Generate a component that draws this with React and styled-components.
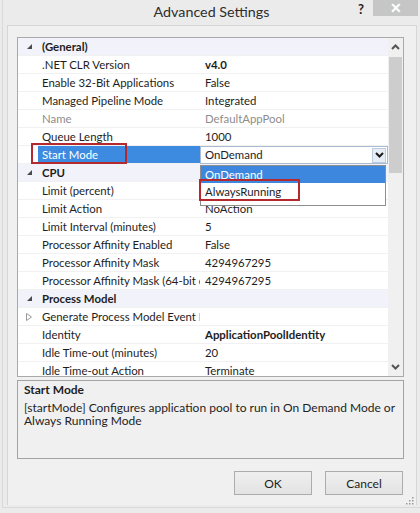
import React from 'react';
import styled, { createGlobalStyle, css } from 'styled-components';

const GlobalStyle = createGlobalStyle`
  html, body { margin: 0; padding: 0; background: #ebebeb; }
  body {
    font-family: Lato, "Noto Sans", sans-serif;
    font-size: 12px;
    color: #1e1e1e;
  }
  * { box-sizing: border-box; }
`;

const Window = styled.div`
  position: relative;
  width: 420px;
  height: 513px;
  background: #ebebeb;
  padding: 0 0 5px 2px;
  display: flex;
`;

const Frame = styled.div`
  flex: 1;
  display: flex;
  flex-direction: column;
  border-left: 1px solid #d9d9d9;
  border-bottom: 1px solid #d9d9d9;
  padding: 0 3px 2px 4px;
`;

const TitleBar = styled.div`
  height: 25px;
  margin: 0 -3px 0 -5px;
  display: grid;
  grid-template-columns: 1fr auto 1fr;
  align-items: start;
`;

const Title = styled.div`
  grid-column: 2;
  font-size: 14.3px;
  line-height: 24px;
  color: #2e2e2e;
  padding-left: 1px;
`;

const Controls = styled.div`
  grid-column: 3;
  justify-self: end;
  display: flex;
  align-items: flex-start;
  gap: 9px;
  margin-right: 2px;
`;

const Help = styled.span`
  font-weight: 700;
  font-size: 13px;
  line-height: 19px;
  color: #222;
`;

const Close = styled.div`
  width: 45px;
  height: 16px;
  background: #c6c6c6;
  color: #fff;
  font-size: 14px;
  font-weight: 700;
  display: flex;
  align-items: center;
  justify-content: center;
  line-height: 1;
`;

const Client = styled.div`
  flex: 1;
  background: #f0f0f0;
  border: 1px solid #d6d6d6;
  border-bottom: none;
  padding: 11px 12px 0 9px;
  display: flex;
  flex-direction: column;
`;

const Grid = styled.div`
  height: 340px;
  border: 1px solid #a9a9a9;
  background: #fff;
  display: flex;
  overflow: hidden;
  font-size: 11.4px;
`;

const Rows = styled.div`
  position: relative;
  flex: 1;
  overflow: hidden;
`;

const Row = styled.div`
  height: 18px;
  display: grid;
  grid-template-columns: 20px 162px 1fr;
  align-items: stretch;
  border-bottom: 1px solid #f1f1f1;
  background: ${p => (p.$category ? '#f2f3fa' : '#fff')};
`;

const Glyph = styled.div`
  display: flex;
  align-items: center;
  justify-content: flex-end;
  padding-right: 6px;
`;

const Cell = styled.div`
  white-space: nowrap;
  overflow: hidden;
  line-height: 17px;
  padding-left: 4px;
  ${p => p.$bold && css`font-weight: 700;`}
  ${p => p.$dim && css`color: #8d8d8d;`}
  ${p => p.$span && css`grid-column: 2 / 4;`}
  ${p => p.$selected && css`background: #3d8be0; color: #fff;`}
`;

const ValueCell = styled(Cell)`
  padding-left: 5px;
`;

const Combo = styled.div`
  display: flex;
  align-items: center;
  justify-content: space-between;
  border: 1px solid #a9bad3;
  margin-bottom: -1px;
  line-height: 16px;
  padding-left: 4px;
  padding-right: 1px;
`;

const ComboButton = styled.div`
  width: 14px;
  height: 15px;
  background: #e6edf7;
  border: 1px solid #bccbe0;
  display: flex;
  align-items: center;
  justify-content: center;
`;

const DropList = styled.div`
  position: absolute;
  left: 182px;
  top: 127px;
  width: 186px;
  height: 41px;
  background: #fff;
  border: 1px solid #8e8e8e;
  z-index: 2;
`;

const ListItem = styled.div`
  height: 17px;
  line-height: 17px;
  padding-left: 4px;
  ${p => p.$active && css`background: #3d88de; color: #fff;`}
`;

const Marker = styled.div`
  position: absolute;
  border: 2px solid #b3292d;
  z-index: 3;
  pointer-events: none;
`;

const Scrollbar = styled.div`
  width: 15px;
  background: #f0f0f0;
  display: flex;
  flex-direction: column;
`;

const ScrollButton = styled.div`
  height: 18px;
  display: flex;
  align-items: center;
  justify-content: center;
`;

const Track = styled.div`
  flex: 1;
  padding: 1px 1px 0 1px;
`;

const Thumb = styled.div`
  height: 116px;
  background: #cdcdcd;
`;

const Description = styled.div`
  margin-top: 3px;
  height: 79px;
  border: 1px solid #a3a3a3;
  padding: 2px 6px;
`;

const DescTitle = styled.div`
  font-weight: 700;
  line-height: 14px;
`;

const DescText = styled.div`
  margin-top: 4px;
  line-height: 13px;
`;

const ButtonRow = styled.div`
  margin-top: 12px;
  display: flex;
  justify-content: flex-end;
  gap: 13px;
  padding-right: 1px;
`;

const Button = styled.button`
  width: 78px;
  height: 24px;
  font-family: inherit;
  font-size: 12px;
  color: #1e1e1e;
  background: linear-gradient(#efefef, #e3e3e3);
  border: 1px solid #acacac;
  padding: 0;
`;

const Gripper = styled.svg`
  position: absolute;
  right: 6px;
  bottom: 8px;
`;

const Chevron = ({ up, color = '#555', w = 2 }) => (
  <svg width="9" height="6" viewBox="0 0 9 6">
    <polyline
      points={up ? '1,5 4.5,1.5 8,5' : '1,1 4.5,4.5 8,1'}
      fill="none"
      stroke={color}
      strokeWidth={w}
    />
  </svg>
);

const Expanded = () => (
  <svg width="5" height="5" viewBox="0 0 5 5">
    <polygon points="5,0 5,5 0,5" fill="#4a4a4a" />
  </svg>
);

const Collapsed = () => (
  <svg width="6" height="8" viewBox="0 0 6 8">
    <polygon points="0.5,0.5 5.5,4 0.5,7.5" fill="none" stroke="#9a9a9a" strokeWidth="1" />
  </svg>
);

const rows = [
  { cat: '(General)' },
  { label: '.NET CLR Version', value: 'v4.0', bold: true },
  { label: 'Enable 32-Bit Applications', value: 'False' },
  { label: 'Managed Pipeline Mode', value: 'Integrated' },
  { label: 'Name', value: 'DefaultAppPool', dim: true },
  { label: 'Queue Length', value: '1000' },
  { label: 'Start Mode', value: 'OnDemand', selected: true, combo: true },
  { cat: 'CPU' },
  { label: 'Limit (percent)', value: '0' },
  { label: 'Limit Action', value: 'NoAction' },
  { label: 'Limit Interval (minutes)', value: '5' },
  { label: 'Processor Affinity Enabled', value: 'False' },
  { label: 'Processor Affinity Mask', value: '4294967295' },
  { label: 'Processor Affinity Mask (64-bit option)', value: '4294967295' },
  { cat: 'Process Model' },
  { label: 'Generate Process Model Event Log Entry', value: '', expander: true },
  { label: 'Identity', value: 'ApplicationPoolIdentity', bold: true },
  { label: 'Idle Time-out (minutes)', value: '20' },
  { label: 'Idle Time-out Action', value: 'Terminate' },
];

export default function App() {
  return (
    <>
      <GlobalStyle />
      <Window>
        <Frame>
          <TitleBar>
            <Title>Advanced Settings</Title>
            <Controls>
              <Help>?</Help>
              <Close>✕</Close>
            </Controls>
          </TitleBar>
          <Client>
            <Grid>
              <Rows>
                {rows.map((r, i) =>
                  r.cat ? (
                    <Row key={i} $category>
                      <Glyph><Expanded /></Glyph>
                      <Cell $bold $span>{r.cat}</Cell>
                    </Row>
                  ) : (
                    <Row key={i}>
                      <Glyph>{r.expander && <Collapsed />}</Glyph>
                      <Cell $dim={r.dim} $selected={r.selected}>{r.label}</Cell>
                      {r.combo ? (
                        <Combo>
                          <span>{r.value}</span>
                          <ComboButton><Chevron color="#1a1a1a" /></ComboButton>
                        </Combo>
                      ) : (
                        <ValueCell $bold={r.bold} $dim={r.dim}>{r.value}</ValueCell>
                      )}
                    </Row>
                  )
                )}
                <DropList>
                  <ListItem $active>OnDemand</ListItem>
                  <ListItem>AlwaysRunning</ListItem>
                </DropList>
                <Marker style={{ left: 13, top: 105, width: 96, height: 21 }} />
                <Marker style={{ left: 181, top: 141, width: 101, height: 22 }} />
              </Rows>
              <Scrollbar>
                <ScrollButton><Chevron up /></ScrollButton>
                <Track><Thumb /></Track>
                <ScrollButton><Chevron /></ScrollButton>
              </Scrollbar>
            </Grid>
            <Description>
              <DescTitle>Start Mode</DescTitle>
              <DescText>
                [startMode] Configures application pool to run in On Demand Mode or Always Running Mode
              </DescText>
            </Description>
            <ButtonRow>
              <Button>OK</Button>
              <Button>Cancel</Button>
            </ButtonRow>
          </Client>
        </Frame>
        <Gripper width="9" height="9" viewBox="0 0 9 9">
          {[[7, 1], [7, 4], [4, 4], [7, 7], [4, 7], [1, 7]].map(([x, y], i) => (
            <rect key={i} x={x} y={y} width="1.5" height="1.5" fill="#9a9a9a" />
          ))}
        </Gripper>
      </Window>
    </>
  );
}
